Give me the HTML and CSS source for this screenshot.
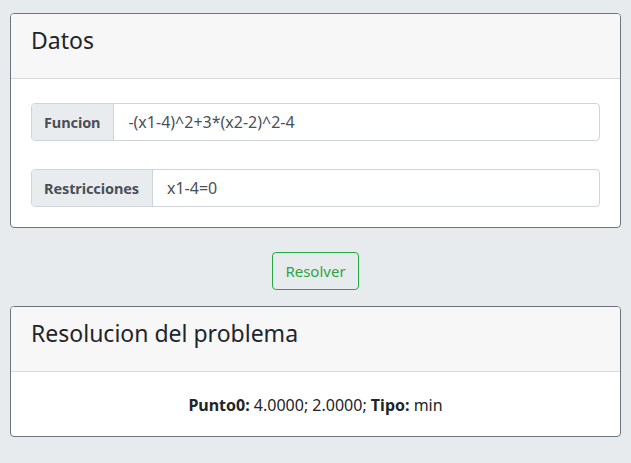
FILE: index.html
```html
<!DOCTYPE html>
<html lang="es">
<head>
<meta charset="utf-8">
<title>Datos</title>
<link rel="stylesheet" href="styles.css">
</head>
<body>
<main class="page">
  <section class="card">
    <header class="card-header">Datos</header>
    <div class="card-body form">
      <div class="input-group">
        <span class="addon">Funcion</span>
        <span class="field">-(x1-4)^2+3*(x2-2)^2-4</span>
      </div>
      <div class="input-group">
        <span class="addon">Restricciones</span>
        <span class="field">x1-4=0</span>
      </div>
    </div>
  </section>
  <div class="actions">
    <button class="btn-outline-success" type="button">Resolver</button>
  </div>
  <section class="card">
    <header class="card-header">Resolucion del problema</header>
    <div class="card-body result">
      <p><b>Punto0:</b> 4.0000; 2.0000; <b>Tipo:</b> min</p>
    </div>
  </section>
</main>
</body>
</html>
```
FILE: styles.css
```css
* { box-sizing: border-box; }
html, body { margin: 0; padding: 0; }
body {
  background: #e8ebee;
  font-family: "Noto Sans", "Open Sans", sans-serif;
  color: #212529;
  width: 631px;
  height: 463px;
  overflow: hidden;
}
.page {
  padding: 13px 10px 0 10px;
  display: flex;
  flex-direction: column;
}
.card {
  background: #fff;
  border: 1px solid #6c757d;
  border-radius: 4px;
  overflow: hidden;
}
.card-header {
  background: #f7f7f7;
  border-bottom: 1px solid #d6d8da;
  height: 65px;
  padding: 0 20px 13px 20px;
  display: flex;
  align-items: center;
  font-size: 23px;
  color: #212529;
}
.form {
  padding: 24px 20px 20px 20px;
  display: flex;
  flex-direction: column;
  gap: 28px;
}
.input-group {
  display: flex;
  height: 38px;
  border: 1px solid #ced4da;
  border-radius: 4px;
  overflow: hidden;
}
.addon {
  background: #e9ecef;
  border-right: 1px solid #ced4da;
  color: #495057;
  font-weight: 700;
  font-size: 14.5px;
  padding: 0 13px 0 12px;
  display: flex;
  align-items: center;
  letter-spacing: -0.1px;
}
.field {
  flex: 1;
  display: flex;
  align-items: center;
  padding: 0 14px;
  color: #495057;
  font-size: 16px;
}
.actions {
  display: flex;
  justify-content: center;
  padding: 24px 0 16px 0;
}
.btn-outline-success {
  font-family: inherit;
  background: transparent;
  border: 1px solid #28a745;
  color: #28a745;
  border-radius: 4px;
  height: 38px;
  width: 87px;
  font-size: 15px;
  padding: 0;
}
.result {
  height: 64px;
  padding-top: 1px;
  display: flex;
  align-items: center;
  justify-content: center;
}
.result p {
  margin: 0;
  font-size: 16px;
  color: #212529;
}
```
